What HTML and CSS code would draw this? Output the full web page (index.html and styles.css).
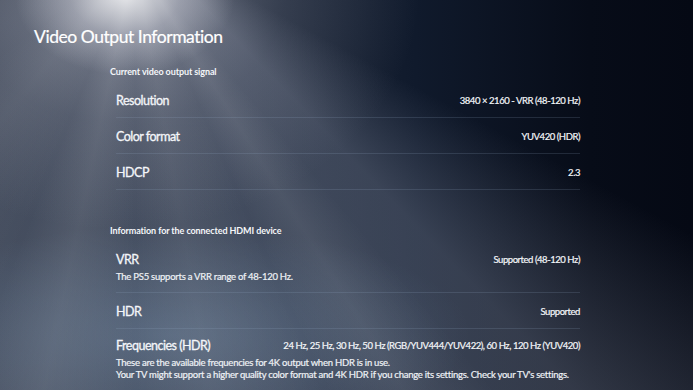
FILE: index.html
```html
<!DOCTYPE html>
<html lang="en">
<head>
    <meta charset="UTF-8">
    <meta name="viewport" content="width=device-width, initial-scale=1.0">
    <title>Video Output Information</title>
    <link rel="stylesheet" href="styles.css">
</head>
<body>
    <div class="screen">
        <h1>Video Output Information</h1>

        <div class="section">
            <div class="section-title">Current video output signal</div>
            <div class="row">
                <div class="row-head">
                    <span class="label">Resolution</span>
                    <span class="value">3840 × 2160 - VRR (48-120 Hz)</span>
                </div>
            </div>
            <div class="row">
                <div class="row-head">
                    <span class="label">Color format</span>
                    <span class="value">YUV420 (HDR)</span>
                </div>
            </div>
            <div class="row">
                <div class="row-head">
                    <span class="label">HDCP</span>
                    <span class="value">2.3</span>
                </div>
            </div>
        </div>

        <div class="section second">
            <div class="section-title">Information for the connected HDMI device</div>
            <div class="row">
                <div class="row-head">
                    <span class="label">VRR</span>
                    <span class="value">Supported (48-120 Hz)</span>
                </div>
                <div class="desc">The PS5 supports a VRR range of 48-120 Hz.</div>
            </div>
            <div class="row">
                <div class="row-head">
                    <span class="label">HDR</span>
                    <span class="value">Supported</span>
                </div>
            </div>
            <div class="row last">
                <div class="row-head">
                    <span class="label">Frequencies (HDR)</span>
                    <span class="value">24 Hz, 25 Hz, 30 Hz, 50 Hz (RGB/YUV444/YUV422), 60 Hz, 120 Hz (YUV420)</span>
                </div>
                <div class="desc">These are the available frequencies for 4K output when HDR is in use.<br>Your TV might support a higher quality color format and 4K HDR if you change its settings. Check your TV's settings.</div>
            </div>
        </div>
    </div>
</body>
</html>
```

FILE: styles.css
```css
html, body {
    margin: 0;
    height: 100%;
}

body {
    font-family: Lato, 'Open Sans', sans-serif;
    color: #f4f6f9;
    overflow: hidden;
    background-color: #0a1222;
    background-image:
        /* spotlight core */
        radial-gradient(ellipse 110px 80px at 125px -5px, rgba(255, 255, 255, 0.8) 0%, rgba(230, 230, 238, 0.35) 50%, rgba(230, 230, 238, 0) 100%),
        radial-gradient(ellipse 300px 240px at 120px -10px, rgba(205, 205, 215, 0.45) 0%, rgba(170, 172, 185, 0.18) 55%, rgba(170, 172, 185, 0) 100%),
        /* soft beams */
        conic-gradient(from 140deg at 135px -40px,
            rgba(255, 255, 255, 0) 0deg,
            rgba(255, 255, 255, 0.07) 8deg,
            rgba(255, 255, 255, 0) 16deg,
            rgba(255, 255, 255, 0.06) 30deg,
            rgba(255, 255, 255, 0) 40deg,
            rgba(255, 255, 255, 0.08) 52deg,
            rgba(255, 255, 255, 0) 62deg,
            rgba(255, 255, 255, 0.05) 80deg,
            rgba(255, 255, 255, 0) 95deg,
            rgba(255, 255, 255, 0) 360deg),
        /* light cone */
        conic-gradient(from 118deg at 140px -60px,
            rgba(150, 158, 178, 0) 0deg,
            rgba(150, 158, 178, 0.3) 18deg,
            rgba(140, 150, 170, 0.3) 70deg,
            rgba(130, 142, 162, 0.22) 120deg,
            rgba(130, 142, 162, 0) 160deg,
            rgba(130, 142, 162, 0) 360deg),
        /* bluish glow bottom left */
        radial-gradient(ellipse 300px 110px at 170px 335px, rgba(105, 135, 165, 0.45) 0%, rgba(105, 135, 165, 0) 100%),
        linear-gradient(to right, #2b3343 0%, #1f293b 35%, #101a2c 60%, #070c18 85%, #050914 100%);
}

.screen {
    padding: 25px 0 0 34px;
}

h1 {
    margin: 0;
    font-size: 17.5px;
    line-height: 24px;
    font-weight: 400;
    letter-spacing: -0.45px;
    color: #fff;
    -webkit-text-stroke: 0.2px #fff;
}

.section {
    margin: 17px 0 0 76px;
    width: 470px;
}

.section.second {
    margin-top: 35px;
}

.section-title {
    font-size: 9px;
    line-height: 12px;
    font-weight: 700;
    letter-spacing: -0.1px;
    margin-bottom: 4px;
}

.row {
    margin-left: 6px;
    padding: 10px 0 9px;
    border-bottom: 1px solid rgba(150, 170, 200, 0.18);
}

.row.last {
    border-bottom: none;
    padding-top: 8px;
}

.row-head {
    display: flex;
    justify-content: space-between;
    align-items: center;
    height: 16px;
}

.label {
    font-size: 12.5px;
    letter-spacing: -0.5px;
    -webkit-text-stroke: 0.3px #f4f6f9;
}

.value {
    font-size: 9.5px;
    letter-spacing: -0.45px;
    white-space: nowrap;
    -webkit-text-stroke: 0.2px #f4f6f9;
}

.desc {
    margin-top: 4px;
    font-size: 9.5px;
    line-height: 12px;
    letter-spacing: -0.25px;
    color: #eef1f5;
    -webkit-text-stroke: 0.2px #eef1f5;
}
```
